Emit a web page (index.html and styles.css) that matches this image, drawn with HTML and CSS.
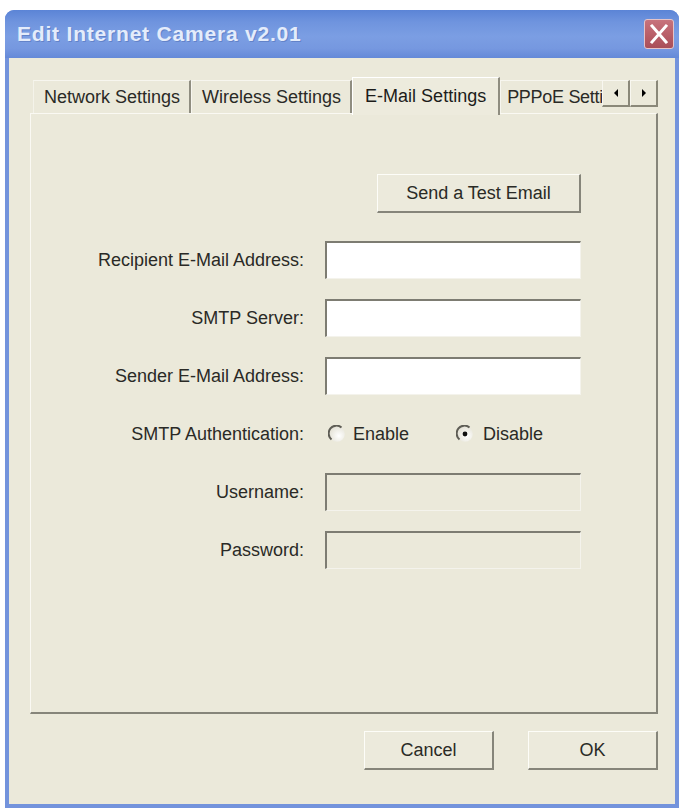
FILE: index.html
```html
<!DOCTYPE html>
<html>
<head>
<meta charset="utf-8">
<title>Edit Internet Camera v2.01</title>
<link rel="stylesheet" href="styles.css">
</head>
<body>
<div class="window">
  <div class="titlebar">
    <span class="title">Edit Internet Camera v2.01</span>
    <div class="close">
      <svg width="30" height="30" viewBox="0 0 30 30"><path d="M8 7 L22 23 M22 7 L8 23" stroke="#fff" stroke-width="3" stroke-linecap="square" fill="none"/></svg>
    </div>
  </div>
  <div class="client">
    <div class="tabstrip">
      <div class="tabs">
        <div class="tab first">Network Settings</div>
        <div class="tab">Wireless Settings</div>
        <div class="tab active">E-Mail Settings</div>
        <div class="tab last">PPPoE Settings</div>
      </div>
      <div class="scroll">
        <div class="sbtn"><svg width="8" height="10" viewBox="0 0 8 10"><path d="M6 1 L2 5 L6 9 Z" fill="#000"/></svg></div>
        <div class="sbtn"><svg width="8" height="10" viewBox="0 0 8 10"><path d="M2 1 L6 5 L2 9 Z" fill="#000"/></svg></div>
      </div>
    </div>
    <div class="panel">
      <div class="content">
        <div class="test-row"><div class="btn test">Send a Test Email</div></div>
        <div class="form">
          <div class="label">Recipient E-Mail Address:</div><div class="field"></div>
          <div class="label">SMTP Server:</div><div class="field"></div>
          <div class="label">Sender E-Mail Address:</div><div class="field"></div>
          <div class="label">SMTP Authentication:</div>
          <div class="radios">
            <div class="radio">
              <svg width="18" height="18" viewBox="0 0 18 18"><defs><radialGradient id="rg1" cx="62%" cy="62%" r="65%"><stop offset="0" stop-color="#ffffff"/><stop offset="1" stop-color="#e4e2d6"/></radialGradient></defs><circle cx="9" cy="9" r="7.8" fill="url(#rg1)"/><path d="M13.5 2.4 A7.8 7.8 0 0 0 3.5 14.5" fill="none" stroke="#5e5d55" stroke-width="2"/></svg>
              <span>Enable</span>
            </div>
            <div class="radio second">
              <svg width="18" height="18" viewBox="0 0 18 18"><defs><radialGradient id="rg2" cx="62%" cy="62%" r="65%"><stop offset="0" stop-color="#ffffff"/><stop offset="1" stop-color="#e4e2d6"/></radialGradient></defs><circle cx="9" cy="9" r="7.8" fill="url(#rg2)"/><path d="M13.5 2.4 A7.8 7.8 0 0 0 3.5 14.5" fill="none" stroke="#5e5d55" stroke-width="2"/><circle cx="9" cy="9" r="2.4" fill="#111"/></svg>
              <span>Disable</span>
            </div>
          </div>
          <div class="label">Username:</div><div class="field disabled"></div>
          <div class="label">Password:</div><div class="field disabled"></div>
        </div>
      </div>
    </div>
    <div class="actions">
      <div class="btn action">Cancel</div>
      <div class="btn action">OK</div>
    </div>
  </div>
</div>
</body>
</html>
```

FILE: styles.css
```css
html, body {
  margin: 0;
  padding: 0;
  background: #ffffff;
}
body {
  font-family: "Liberation Sans", Arial, sans-serif;
  font-size: 18px;
  color: #2a2a26;
}
.window {
  margin: 10px 0 0 5px;
  width: 674px;
  height: 798px;
  box-sizing: border-box;
  display: flex;
  flex-direction: column;
  background: #7393dc;
  border-radius: 9px 9px 0 0;
  padding: 0 4px 4px 4px;
}
.titlebar {
  height: 48px;
  margin: 0 -4px;
  padding: 0 5px 0 12px;
  display: flex;
  align-items: center;
  justify-content: space-between;
  border-radius: 9px 9px 0 0;
  background: linear-gradient(180deg, #5b84d6 0%, #6f94de 25%, #7b9ee3 55%, #7698e0 80%, #6489d8 100%);
}
.title {
  font-family: "Liberation Sans", Arial, sans-serif;
  font-weight: bold;
  font-size: 21px;
  letter-spacing: 0.8px;
  color: #e4ecfb;
  text-shadow: 1px 1px 0 rgba(60, 90, 160, 0.4);
}
.close {
  width: 30px;
  height: 30px;
  box-sizing: border-box;
  border: 1px solid #e6c4c8;
  border-radius: 3px;
  background: linear-gradient(180deg, #c7737c 0%, #b75c66 60%, #a94f59 100%);
  display: flex;
  align-items: center;
  justify-content: center;
  overflow: hidden;
}
.close svg {
  display: block;
  flex: none;
}
.client {
  flex: 1;
  background: #ebe9da;
  padding: 19px 17px 0 21px;
  display: flex;
  flex-direction: column;
}
.tabstrip {
  height: 36px;
  display: flex;
  align-items: flex-end;
  position: relative;
  z-index: 2;
}
.tabs {
  flex: 1;
  display: flex;
  align-items: flex-end;
  overflow: hidden;
  height: 38px;
  margin-bottom: -2px;
  padding-left: 3px;
}
.tab {
  flex: none;
  height: 33px;
  margin-bottom: 2px;
  box-sizing: border-box;
  padding: 0 9px 0 10px;
  display: flex;
  align-items: center;
  white-space: nowrap;
  border-top: 1px solid #f7f6ef;
  border-left: 1px solid #f7f6ef;
  border-right: 2px solid #8f8d80;
  background: #ebe9da;
  color: #2a2a26;
}
.tab.first {
  border-left: 1px solid #f4f3ea;
}
.tab.last {
  padding-left: 6px;
  letter-spacing: -0.3px;
}
.tab.active {
  height: 38px;
  margin-bottom: 0;
  padding: 0 12px 1px 12px;
  border-left: 1px solid #ffffff;
  border-top: 1px solid #ffffff;
  background: #edebdd;
  color: #1c1c1a;
}
.scroll {
  flex: none;
  align-self: flex-start;
  margin-top: 3px;
  display: flex;
}
.sbtn {
  width: 28px;
  height: 27px;
  box-sizing: border-box;
  border-top: 1px solid #f8f7f0;
  border-left: 1px solid #f8f7f0;
  border-right: 2px solid #8a8879;
  border-bottom: 2px solid #8a8879;
  background: #ebe9da;
  display: flex;
  align-items: center;
  justify-content: center;
}
.panel {
  height: 601px;
  box-sizing: border-box;
  border-top: 1px solid #faf9f3;
  border-left: 1px solid #faf9f3;
  border-right: 2px solid #86857a;
  border-bottom: 2px solid #86857a;
  background: #ebe9da;
  position: relative;
  z-index: 1;
}
.content {
  width: 550px;
  padding-top: 60px;
  display: flex;
  flex-direction: column;
}
.test-row {
  display: flex;
  justify-content: flex-end;
  margin-bottom: 28px;
}
.btn {
  box-sizing: border-box;
  display: flex;
  align-items: center;
  justify-content: center;
  background: #eceadc;
  border-top: 1px solid #fdfdf8;
  border-left: 1px solid #fdfdf8;
  border-right: 2px solid #86857a;
  border-bottom: 2px solid #86857a;
  color: #2a2a26;
}
.btn.test {
  width: 204px;
  height: 39px;
}
.form {
  display: grid;
  grid-template-columns: 273px 256px;
  column-gap: 21px;
  row-gap: 20px;
  grid-auto-rows: 38px;
}
.label {
  display: flex;
  align-items: center;
  justify-content: flex-end;
  white-space: nowrap;
}
.field {
  box-sizing: border-box;
  background: #ffffff;
  border-top: 2px solid #7d7c72;
  border-left: 2px solid #7d7c72;
  border-right: 1px solid #f4f3ec;
  border-bottom: 1px solid #f4f3ec;
}
.field.disabled {
  background: #ebe9da;
}
.radios {
  display: flex;
  align-items: center;
  padding-left: 3px;
}
.radio {
  display: flex;
  align-items: center;
  gap: 7px;
}
.radio svg {
  display: block;
  flex: none;
}
.radio.second {
  margin-left: 47px;
  gap: 9px;
}
.actions {
  margin-top: 17px;
  display: flex;
  justify-content: flex-end;
  gap: 34px;
}
.btn.action {
  width: 130px;
  height: 39px;
}
```
